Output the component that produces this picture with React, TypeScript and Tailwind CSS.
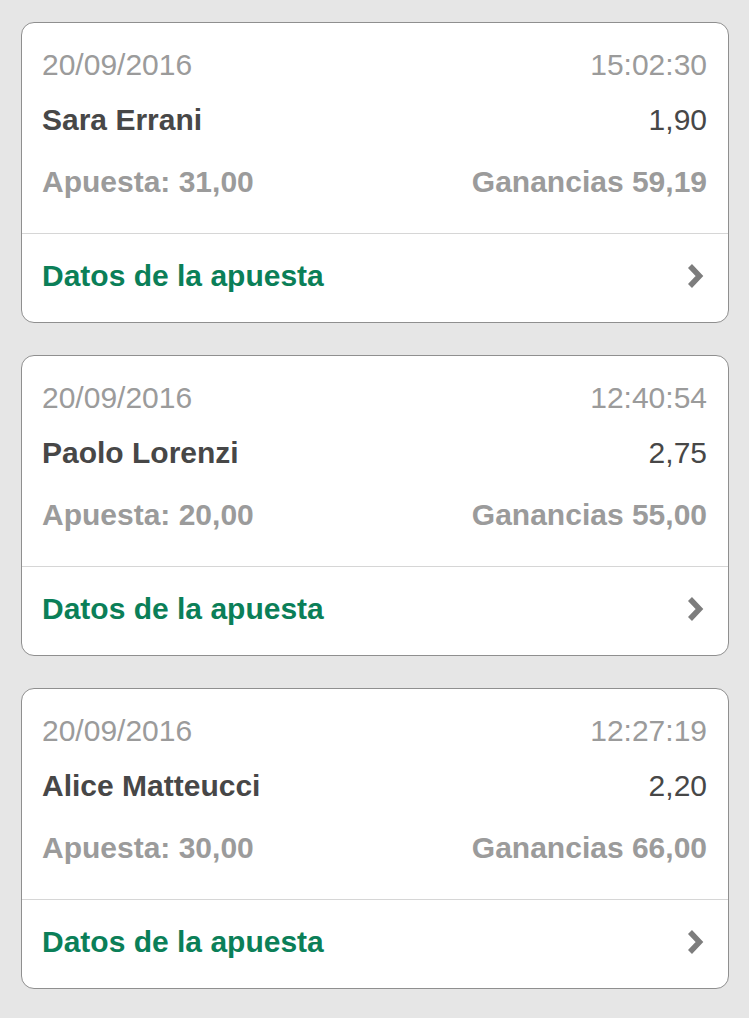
import React from 'react';

interface Bet {
    date: string;
    time: string;
    player: string;
    odds: string;
    stake: string;
    winnings: string;
}

const bets: Bet[] = [
    { date: '20/09/2016', time: '15:02:30', player: 'Sara Errani', odds: '1,90', stake: '31,00', winnings: '59,19' },
    { date: '20/09/2016', time: '12:40:54', player: 'Paolo Lorenzi', odds: '2,75', stake: '20,00', winnings: '55,00' },
    { date: '20/09/2016', time: '12:27:19', player: 'Alice Matteucci', odds: '2,20', stake: '30,00', winnings: '66,00' },
];

const Chevron = () => (
    <svg width="20" height="26" viewBox="0 0 20 26" className="mr-[1px] shrink-0">
        <path d="M4 3 L13.5 13 L4 23" fill="none" stroke="#7d7d7d" strokeWidth="5.5" strokeLinejoin="miter" />
    </svg>
);

const BetCard: React.FC<{ bet: Bet }> = ({ bet }) => (
    <div className="bg-white border-[1.5px] border-[#8f8f8f] rounded-[13px] overflow-hidden">
        <div className="pl-[20px] pr-[21px] pt-[24px] pb-[33px] flex flex-col">
            <div className="flex justify-between leading-[36px] text-[#9b9b9b]">
                <span>{bet.date}</span>
                <span>{bet.time}</span>
            </div>
            <div className="flex justify-between leading-[36px] mt-[19px] text-[#474747]">
                <span className="font-bold">{bet.player}</span>
                <span>{bet.odds}</span>
            </div>
            <div className="flex justify-between leading-[36px] mt-[26px] font-bold text-[#9b9b9b]">
                <span>Apuesta: {bet.stake}</span>
                <span>Ganancias {bet.winnings}</span>
            </div>
        </div>
        <div className="border-t border-[#d6d6d6] pl-[20px] pr-[21px] pt-[24px] pb-[28px] flex items-center justify-between">
            <span className="font-bold leading-[36px] text-[#0b7f58]">Datos de la apuesta</span>
            <Chevron />
        </div>
    </div>
);

export default function App() {
    return (
        <div
            className="min-h-[1018px] bg-[#e6e6e6] pt-[22px] pl-[21px] pr-[20px] pb-[30px] flex flex-col gap-[32px] text-[30px]"
            style={{ fontFamily: '"Liberation Sans", Arial, sans-serif' }}
        >
            {bets.map((bet, i) => (
                <BetCard key={i} bet={bet} />
            ))}
        </div>
    );
}
